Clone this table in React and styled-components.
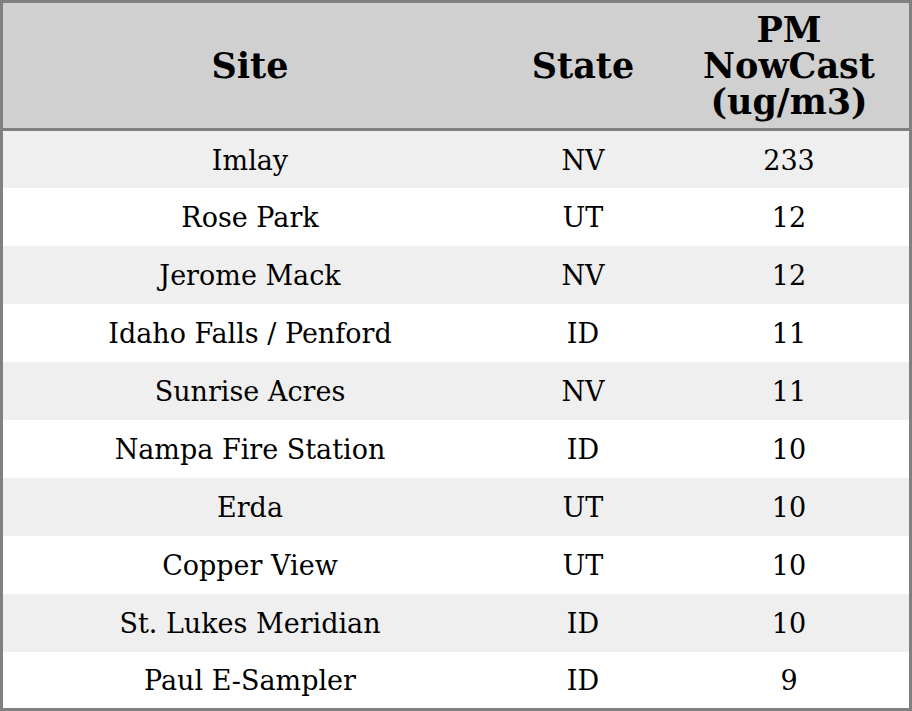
import React from "react"
import styled, { createGlobalStyle } from "styled-components"

const GlobalStyle = createGlobalStyle`
  html, body {
    margin: 0;
    padding: 0;
    background: #fff;
  }
`

const StyledTable = styled.table`
  width: 912px;
  height: 711px;
  border-collapse: collapse;
  border: 3px solid #808080;
  font-family: "DejaVu Serif", serif;
  color: #000;
  table-layout: fixed;
`

const HeadCell = styled.th`
  height: 125px;
  padding: 0;
  background-color: #d0d0d0;
  border-bottom: 3px solid #808080;
  font-size: 35px;
  font-weight: bold;
  line-height: 36px;
  text-align: center;
  vertical-align: middle;
  width: ${ ({ w }) => w };
`

const Row = styled.tr`
  height: 57.7px;
  background-color: ${ ({ striped }) => striped ? "#efefef" : "#fff" };
`

const Cell = styled.td`
  padding: 2px 0 0;
  font-size: 27px;
  text-align: center;
  vertical-align: middle;
`

const sites = [
  { site: "Imlay", state: "NV", pm: 233 },
  { site: "Rose Park", state: "UT", pm: 12 },
  { site: "Jerome Mack", state: "NV", pm: 12 },
  { site: "Idaho Falls / Penford", state: "ID", pm: 11 },
  { site: "Sunrise Acres", state: "NV", pm: 11 },
  { site: "Nampa Fire Station", state: "ID", pm: 10 },
  { site: "Erda", state: "UT", pm: 10 },
  { site: "Copper View", state: "UT", pm: 10 },
  { site: "St. Lukes Meridian", state: "ID", pm: 10 },
  { site: "Paul E-Sampler", state: "ID", pm: 9 }
]

const App = () => (
  <>
    <GlobalStyle />
    <StyledTable>
      <thead>
        <tr>
          <HeadCell w="494px">Site</HeadCell>
          <HeadCell w="172px">State</HeadCell>
          <HeadCell w="240px">PM<br />NowCast<br />(ug/m3)</HeadCell>
        </tr>
      </thead>
      <tbody>
        {
          sites.map((s, i) => (
            <Row striped={ i % 2 === 0 } key={ s.site }>
              <Cell>{ s.site }</Cell>
              <Cell>{ s.state }</Cell>
              <Cell>{ s.pm }</Cell>
            </Row>
          ))
        }
      </tbody>
    </StyledTable>
  </>
)

export default App
